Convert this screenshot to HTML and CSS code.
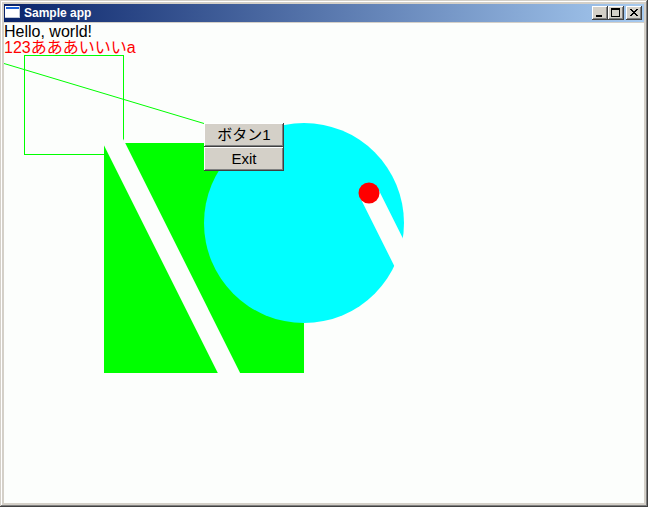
FILE: index.html
```html
<!DOCTYPE html>
<html lang="ja">
<head>
<meta charset="utf-8">
<title>Sample app</title>
<link rel="stylesheet" href="styles.css">
</head>
<body>
<div class="window">
  <div class="titlebar">
    <svg class="app-icon" viewBox="0 0 16 16" width="16" height="16" shape-rendering="crispEdges">
      <rect x="0" y="1" width="15" height="12" fill="#ffffff"/>
      <rect x="1" y="2" width="13" height="2" fill="#1a5fd6"/>
      <rect x="1" y="4" width="13" height="8" fill="#ffffff"/>
      <rect x="14" y="1" width="1" height="12" fill="#c0c8d8"/>
      <rect x="0" y="12" width="15" height="1" fill="#c0c8d8"/>
    </svg>
    <span class="title">Sample app</span>
    <div class="caption-buttons">
      <span class="cap-btn">
        <svg viewBox="0 0 16 14" width="16" height="14" shape-rendering="crispEdges"><path d="M4 9h6v2h-6z" fill="#000"/></svg>
      </span>
      <span class="cap-btn">
        <svg viewBox="0 0 16 14" width="16" height="14" shape-rendering="crispEdges"><path d="M3 2h9v2h-9zM3 4h1v6h-1zM11 4h1v6h-1zM3 10h9v1h-9z" fill="#000"/></svg>
      </span>
      <span class="cap-btn close">
        <svg viewBox="0 0 16 14" width="16" height="14" shape-rendering="crispEdges"><path d="M4 3h2v1h-2zM10 3h2v1h-2zM5 4h2v1h-2zM9 4h2v1h-2zM6 5h4v1h-4zM7 6h2v1h-2zM6 7h4v1h-4zM5 8h2v1h-2zM9 8h2v1h-2zM4 9h2v1h-2zM10 9h2v1h-2z" fill="#000"/></svg>
      </span>
    </div>
  </div>
  <div class="client">
    <div class="lines">
      <div class="line hello">Hello, world!</div>
      <div class="line red">123あああいいいa</div>
    </div>
    <svg class="canvas" width="640" height="480" viewBox="0 0 640 480">
      <rect x="20.5" y="32.5" width="99" height="99" fill="none" stroke="#00ff00" stroke-width="1" shape-rendering="crispEdges"/>
      <line x1="0" y1="40.5" x2="200" y2="100.5" stroke="#00ff00" stroke-width="1"/>
      <rect x="100" y="120" width="200" height="230" fill="#00ff00" shape-rendering="crispEdges"/>
      <circle cx="300" cy="200" r="100" fill="#00ffff"/>
      <line x1="100" y1="100" x2="245" y2="390" stroke="#fcfefc" stroke-width="20" stroke-linecap="butt"/>
      <line x1="365" y1="170" x2="430" y2="300" stroke="#fcfefc" stroke-width="20" stroke-linecap="butt"/>
      <circle cx="365" cy="170" r="10.5" fill="#ff0000"/>
    </svg>
    <div class="controls">
      <button class="btn" type="button">ボタン1</button>
      <button class="btn" type="button">Exit</button>
    </div>
  </div>
</div>
</body>
</html>
```
FILE: styles.css
```css
html, body {
  margin: 0;
  padding: 0;
  background: #d4d0c8;
}

body {
  width: 648px;
  height: 507px;
  overflow: hidden;
}

.window {
  box-sizing: border-box;
  width: 648px;
  height: 507px;
  padding: 4px;
  background: #d4d0c8;
  box-shadow:
    inset -1px -1px #404040,
    inset 1px 1px #d4d0c8,
    inset -2px -2px #808080,
    inset 2px 2px #ffffff;
  display: flex;
  flex-direction: column;
  gap: 1px;
}

.titlebar {
  flex: none;
  height: 18px;
  display: flex;
  align-items: center;
  padding: 0 2px 0 1px;
  background: linear-gradient(to right, #0a246a, #a6caf0);
  color: #ffffff;
  font: bold 12px "Liberation Sans", Arial, sans-serif;
}

.app-icon {
  flex: none;
  display: block;
  margin-right: 3px;
}

.title {
  flex: 1;
  white-space: nowrap;
  line-height: 18px;
}

.caption-buttons {
  display: flex;
  align-items: center;
}

.cap-btn {
  display: block;
  width: 16px;
  height: 14px;
  background: #d4d0c8;
  box-shadow:
    inset -1px -1px #404040,
    inset 1px 1px #ffffff,
    inset -2px -2px #808080,
    inset 2px 2px #d4d0c8;
}

.cap-btn svg {
  display: block;
}

.cap-btn.close {
  margin-left: 2px;
}

.client {
  position: relative;
  flex: none;
  width: 640px;
  height: 480px;
  background: #fcfefc;
  overflow: hidden;
  font-family: "Liberation Sans", "Noto Sans CJK JP", sans-serif;
  font-size: 16px;
  line-height: 16px;
}

.lines {
  padding-top: 1px;
}

.line {
  height: 16px;
  white-space: nowrap;
}

.hello {
  color: #000000;
}

.red {
  color: #ff0000;
}

.canvas {
  position: absolute;
  left: 0;
  top: 0;
  display: block;
}

.controls {
  position: absolute;
  left: 200px;
  top: 100px;
  display: flex;
  flex-direction: column;
}

.btn {
  box-sizing: border-box;
  width: 80px;
  height: 24px;
  margin: 0;
  padding: 0;
  border: 0;
  background: #d4d0c8;
  box-shadow:
    inset -1px -1px #404040,
    inset 1px 1px #ffffff,
    inset -2px -2px #808080,
    inset 2px 2px #d4d0c8;
  color: #000000;
  font-family: "Liberation Sans", "Noto Sans CJK JP", sans-serif;
  font-size: 15px;
  line-height: 22px;
}
```
